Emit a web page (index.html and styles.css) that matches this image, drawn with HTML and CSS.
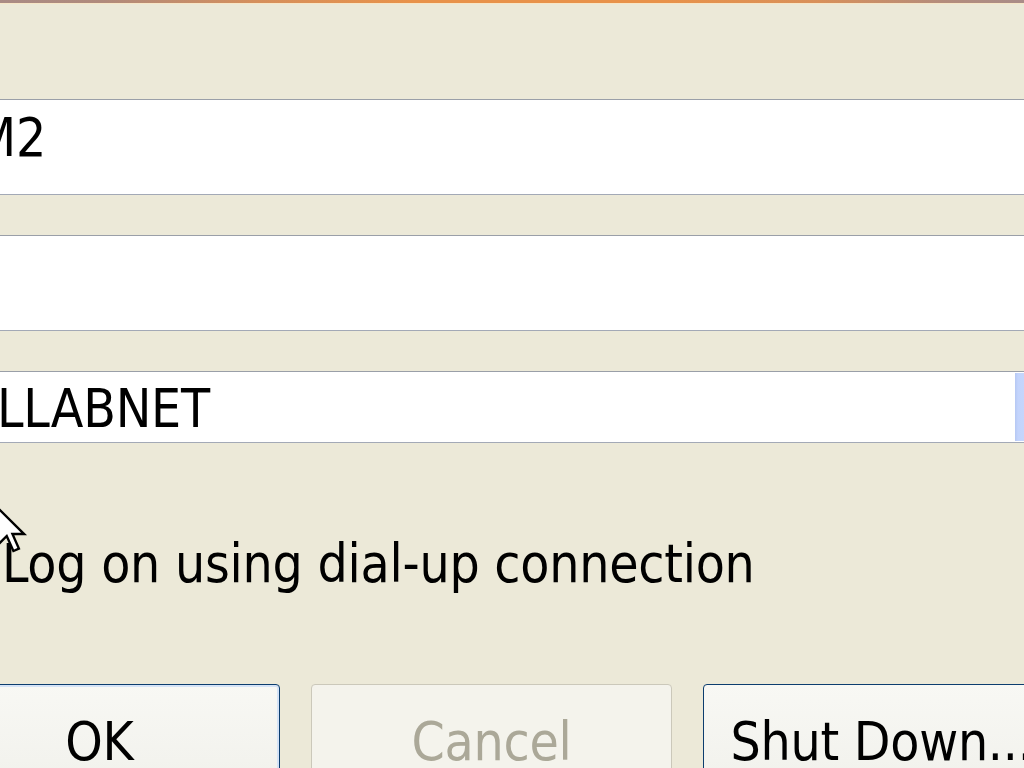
FILE: index.html
```html
<!DOCTYPE html>
<html lang="en">
<head>
<meta charset="utf-8">
<title>Log On to Windows</title>
<link rel="stylesheet" href="styles.css">
</head>
<body>
<div class="title-edge"></div>
<div class="dialog">
  <div class="field field-user"><span class="value">M2</span></div>
  <div class="field field-pass"></div>
  <div class="field combo">
    <span class="value value-domain">LLABNET</span>
    <span class="drop"></span>
  </div>
  <div class="check-row"><span class="check-label">Log on using dial-up connection</span></div>
  <div class="buttons">
    <div class="btn btn-default">OK</div>
    <div class="btn btn-disabled">Cancel</div>
    <div class="btn btn-shut">Shut Down...</div>
  </div>
</div>
<svg class="cursor" width="32" height="48" viewBox="0 0 13 20" aria-hidden="true">
  <path d="M0.5 0.5 L0.5 16.5 L4.5 12.5 L7.3 18.8 L9.6 17.8 L6.9 11.7 L11.8 11.7 Z" fill="#fff" stroke="#000" stroke-width="1" stroke-linejoin="miter"/>
</svg>
</body>
</html>
```

FILE: styles.css
```css
html, body {
  margin: 0;
  padding: 0;
}
body {
  width: 1024px;
  height: 768px;
  overflow: hidden;
  background: #ECE9D8;
  position: relative;
  font-family: "DejaVu Sans Condensed", "DejaVu Sans", sans-serif;
  font-stretch: condensed;
  font-size: 53px;
  line-height: 62px;
  letter-spacing: -0.25px;
  color: #000;
}
.title-edge {
  height: 3px;
  background: linear-gradient(to right, #A98B85 0%, #B08A7C 10%, #D58F5C 25%, #E8924A 40%, #E8924A 65%, #D8905A 80%, #B48C7C 92%, #A98C88 100%);
  border-bottom: 1px solid #F7E6C6;
}
.dialog {
  margin-left: -81px;
  width: 1200px;
  padding-top: 95px;
  display: flex;
  flex-direction: column;
}
.field {
  width: 1118px;
  height: 94px;
  background: #fff;
  border: 1px solid #9A9FA8;
  border-bottom-color: #A3A9B6;
  box-sizing: content-box;
}
.field + .field {
  margin-top: 40px;
}
.field-user {
  padding: 7px 0 0 55px;
  height: 87px;
  width: 1063px;
  box-sizing: content-box;
}
.field .value {
  display: block;
  height: 62px;
  white-space: nowrap;
}
.combo {
  height: 70px;
  display: flex;
  align-items: stretch;
}
.value-domain {
  flex: 1;
  padding: 6px 0 0 77px;
}
.drop {
  width: 22px;
  margin: 1px;
  background: linear-gradient(to right, #B6C8F3 0px, #C3D4FC 3px, #C8D8FD 100%);
}
.check-row {
  margin-top: 90px;
  padding-left: 83px;
  height: 62px;
  white-space: nowrap;
}
.buttons {
  margin-top: 89px;
  display: flex;
  gap: 31px;
}
.btn {
  width: 359px;
  height: 100px;
  box-sizing: content-box;
  border: 1px solid #0C3D6E;
  border-radius: 4px;
  background: linear-gradient(to bottom, #F8F8F4 0%, #F3F3EE 60%, #EEEDE6 100%);
  text-align: center;
  padding-top: 26px;
  white-space: nowrap;
}
.btn-default {
  box-shadow: inset 0 0 0 2px #D5E3F6;
}
.btn-disabled {
  border-color: #CBC8BA;
  color: #ABA898;
  background: #F4F3EC;
}
.btn-shut {
  text-indent: -4px;
}
.cursor {
  position: absolute;
  left: -4px;
  top: 506px;
  width: 31px;
  height: 48px;
  overflow: visible;
}
```
